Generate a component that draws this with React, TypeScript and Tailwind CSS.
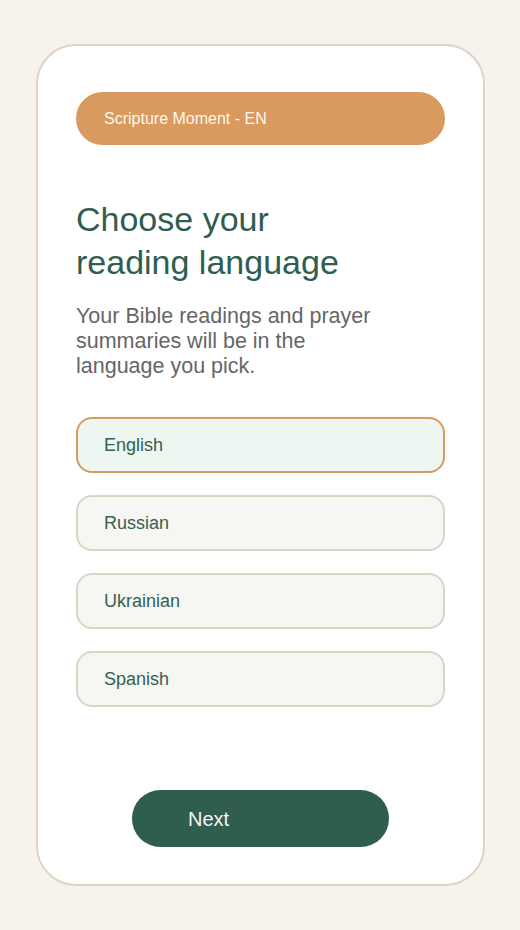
import { useState } from "react";

const languages = ["English", "Russian", "Ukrainian", "Spanish"];

export default function App() {
  const [selected, setSelected] = useState("English");

  return (
    <div
      className="min-h-[930px] w-full bg-[#f7f2eb] py-[44px]"
      style={{ fontFamily: '"Liberation Sans", Arial, sans-serif' }}
    >
      <div className="ml-[36px] flex h-[842px] w-[449px] flex-col rounded-[40px] border-2 border-[#ded4c6] bg-white px-[38px] pt-[46px] pb-[37px]">
        <div className="flex h-[53px] items-center rounded-full bg-[#d89a5f] pl-[28px] text-[16px] text-[#fff7ec]">
          Scripture Moment - EN
        </div>

        <h1 className="mt-[53px] max-w-[300px] text-[34px] leading-[43px] text-[#2f5e4f]">
          Choose your reading language
        </h1>
        <p className="mt-[20px] max-w-[305px] text-[21.5px] leading-[25px] text-[#666666]">
          Your Bible readings and prayer summaries will be in the language you pick.
        </p>

        <div className="mt-[38px] flex flex-col gap-[22px]">
          {languages.map((lang) => (
            <button
              key={lang}
              onClick={() => setSelected(lang)}
              className={
                lang === selected
                  ? "flex h-[56px] items-center rounded-[16px] border-2 border-[#d89a5f] bg-[#edf6f0] pl-[26px] text-left text-[18px] text-[#36604f]"
                  : "flex h-[56px] items-center rounded-[16px] border-2 border-[#ded4c6] bg-[#f6f6f3] pl-[26px] text-left text-[18px] text-[#36604f]"
              }
            >
              {lang}
            </button>
          ))}
        </div>

        <button className="mx-auto mt-auto flex h-[57px] w-[257px] items-center rounded-full bg-[#2f5e50] pl-[56px] text-[20px] text-[#f6f6f2]">
          Next
        </button>
      </div>
    </div>
  );
}
